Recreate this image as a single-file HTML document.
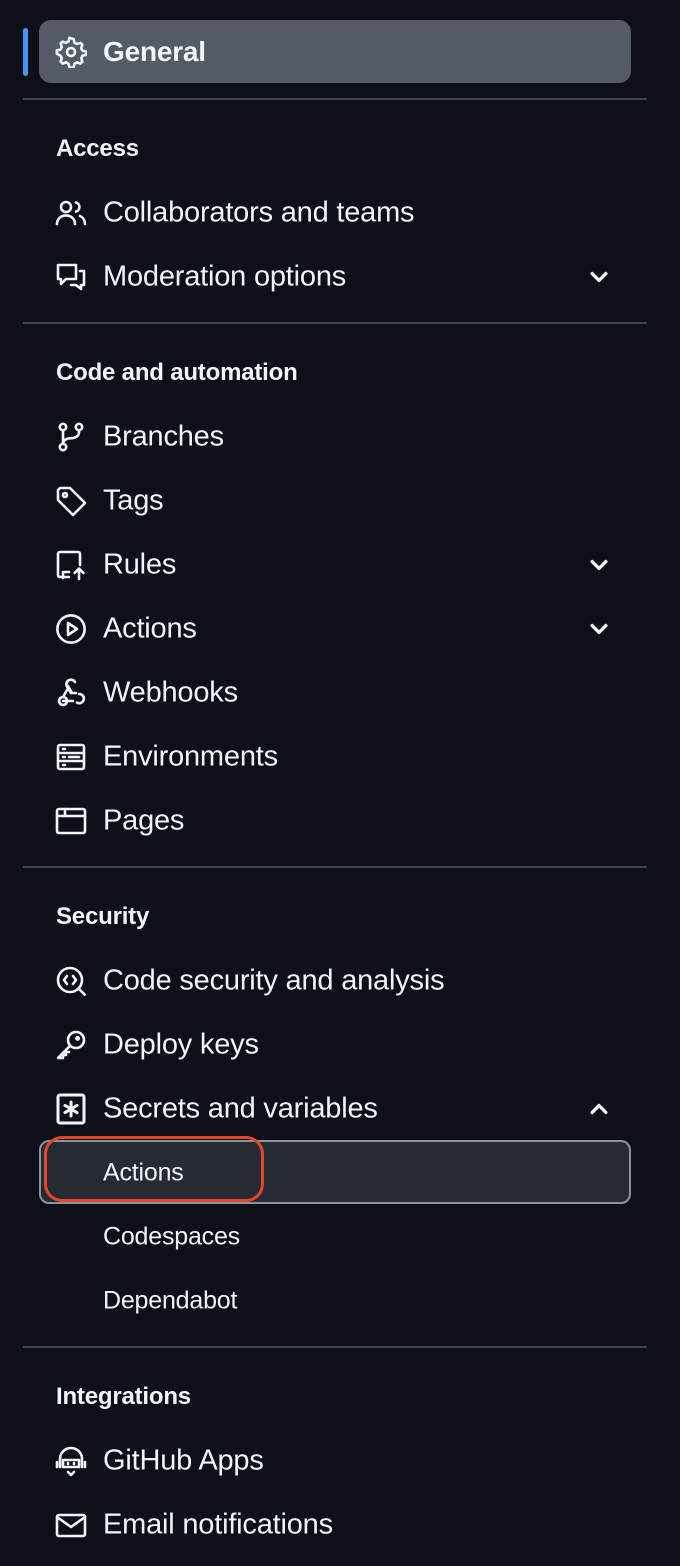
<!DOCTYPE html>
<html><head><meta charset="utf-8"><style>
body{margin:0;width:680px;height:1566px;background:#0d1117;font-family:"Liberation Sans",sans-serif;color:#f0f6fc;position:relative;overflow:hidden}
.r{position:absolute;left:0;height:64px;width:680px}
.t{position:absolute;left:103px;top:50%;transform:translateY(-50%);font-size:29px;white-space:nowrap;letter-spacing:-0.2px}
.h{position:absolute;left:56px;font-size:24px;font-weight:bold;transform:translateY(-50%);letter-spacing:-0.2px}
.s{position:absolute;left:23px;width:624px;height:2px;background:#3d444d}
svg.i{position:absolute;left:55px;top:16px;width:32px;height:32px;fill:none;stroke:#f0f6fc;stroke-width:1.3;stroke-linecap:round;stroke-linejoin:round}
svg.c{position:absolute;left:588px;top:21px;width:22px;height:22px;fill:none;stroke:#f0f6fc;stroke-width:2.4;stroke-linecap:round;stroke-linejoin:round}
.sub{font-size:25px}
</style></head><body>
<div style="position:absolute;left:23px;top:28px;width:5px;height:48px;border-radius:3px;background:#4493f8"></div>
<div style="position:absolute;left:39px;top:20px;width:592px;height:63px;border-radius:12px;background:#545b66"></div>
<div class="r" style="top:20px"><svg class="i" viewBox="0 0 16 16"><circle cx="8" cy="8" r="2"/><path d="M8 1.2l1.3.3.4 1.8 1.3.7 1.7-.6 1 1-.6 1.7.7 1.3 1.8.4v1.6l-1.8.4-.7 1.3.6 1.7-1 1-1.7-.6-1.3.7-.4 1.8H7.2l-.4-1.8-1.3-.7-1.7.6-1-1 .6-1.7-.7-1.3L.9 8.8V7.2l1.8-.4.7-1.3-.6-1.7 1-1 1.7.6 1.3-.7.4-1.8z"/></svg><span class="t" style="font-weight:bold;font-size:28px">General</span></div>
<div class="s" style="top:98px"></div>
<div class="h" style="top:149px">Access</div>
<div class="r" style="top:181px"><svg class="i" viewBox="0 0 16 16"><circle cx="5.5" cy="5" r="2.5"/><path d="M1 13.5c0-2.5 2-4.3 4.5-4.3s4.5 1.8 4.5 4.3M10.5 2.7a2.4 2.4 0 0 1 0 4.6M12.5 9.5c1.5.7 2.5 2.2 2.5 4"/></svg><span class="t">Collaborators and teams</span></div>
<div class="r" style="top:245px"><svg class="i" viewBox="0 0 16 16"><path d="M1.5 2h9v7h-5l-2.5 2.5V9h-1.5zM12.5 5h2v7H13v2l-2.5-2H8"/></svg><span class="t">Moderation options</span><svg class="c" viewBox="0 0 16 16"><path d="M3 5.5l5 5 5-5"/></svg></div>
<div class="s" style="top:322px"></div>
<div class="h" style="top:373px">Code and automation</div>
<div class="r" style="top:405px"><svg class="i" viewBox="0 0 16 16"><circle cx="4" cy="3" r="1.6"/><circle cx="4" cy="13" r="1.6"/><circle cx="12" cy="3" r="1.6"/><path d="M4 4.6v6.8M12 4.6v1c0 2-2 3-4 3s-4 1-4 2.8"/></svg><span class="t">Branches</span></div>
<div class="r" style="top:469px"><svg class="i" viewBox="0 0 16 16"><path d="M1.5 2.5v5l7.5 7.5 6-6-7.5-7.5h-5z"/><circle cx="5" cy="5" r="1"/></svg><span class="t">Tags</span></div>
<div class="r" style="top:533px"><svg class="i" viewBox="0 0 16 16"><path d="M7 14H2.5a1 1 0 0 1-1-1V2.5a1 1 0 0 1 1-1h9a1 1 0 0 1 1 1V8M4 14.5v-3h3M12 15v-5M9.8 12l2.2-2.2 2.2 2.2"/></svg><span class="t">Rules</span><svg class="c" viewBox="0 0 16 16"><path d="M3 5.5l5 5 5-5"/></svg></div>
<div class="r" style="top:597px"><svg class="i" viewBox="0 0 16 16"><circle cx="8" cy="8" r="6.8"/><path d="M6.5 5v6l4.5-3z"/></svg><span class="t">Actions</span><svg class="c" viewBox="0 0 16 16"><path d="M3 5.5l5 5 5-5"/></svg></div>
<div class="r" style="top:661px"><svg class="i" viewBox="0 0 16 16"><path d="M6 6.5 4 10M10 2.5a2.3 2.3 0 0 0-4 2.3L8 8M4 12h5M12 8.5a2.3 2.3 0 1 1-1 4.3M4 10a2 2 0 1 0 .1 0M6.5 4.5l2 3.5 2 0"/></svg><span class="t">Webhooks</span></div>
<div class="r" style="top:725px"><svg class="i" viewBox="0 0 16 16"><rect x="1.5" y="2" width="13" height="12" rx="1"/><path d="M1.5 6h13M1.5 10h13M4 4h1M4 8h1M4 12h1M7 8h5"/></svg><span class="t">Environments</span></div>
<div class="r" style="top:789px"><svg class="i" viewBox="0 0 16 16"><rect x="1" y="2" width="14" height="12" rx="1"/><path d="M1 5.5h14M5 2v3.5"/></svg><span class="t">Pages</span></div>
<div class="s" style="top:866px"></div>
<div class="h" style="top:917px">Security</div>
<div class="r" style="top:949px"><svg class="i" viewBox="0 0 16 16"><circle cx="7.5" cy="7.5" r="6"/><path d="M12 12l2.8 2.8M6 5.5 4.5 7.5 6 9.5M9 5.5l1.5 2L9 9.5"/></svg><span class="t">Code security and analysis</span></div>
<div class="r" style="top:1013px"><svg class="i" viewBox="0 0 16 16"><circle cx="10.5" cy="5.5" r="4"/><path d="M7.6 8.3 1.5 14.5h2.5v-1.5h1.5v-1.5H7"/><circle cx="11.3" cy="4.7" r=".6"/></svg><span class="t">Deploy keys</span></div>
<div class="r" style="top:1077px"><svg class="i" viewBox="0 0 16 16" style="stroke-width:1.5"><rect x="1.5" y="1" width="13" height="14" rx="1"/><path d="M8 4.5v7M5 6.2l6 3.6M11 6.2 5 9.8"/></svg><span class="t">Secrets and variables</span><svg class="c" viewBox="0 0 16 16"><path d="M3 10.5l5-5 5 5"/></svg></div>
<div style="position:absolute;left:39px;top:1140px;width:588px;height:60px;border:2px solid #8b949e;border-radius:10px;background:#262a33"></div>
<div style="position:absolute;left:44px;top:1136px;width:214px;height:60px;border:3px solid #e5452a;border-radius:18px"></div>
<div class="r" style="top:1141px"><span class="t sub">Actions</span></div>
<div class="r" style="top:1205px"><span class="t sub">Codespaces</span></div>
<div class="r" style="top:1269px"><span class="t sub">Dependabot</span></div>
<div class="s" style="top:1346px"></div>
<div class="h" style="top:1397px">Integrations</div>
<div class="r" style="top:1429px"><svg class="i" viewBox="0 0 16 16"><path d="M2.5 11V7a5.5 5.5 0 0 1 11 0v4M1 8.5v2.5M15 8.5v2.5M4 7.5h8v3.5H4zM6.5 13.5l1.5 1.5 1.5-1.5M6.5 9v.5M9.5 9v.5"/></svg><span class="t">GitHub Apps</span></div>
<div class="r" style="top:1493px"><svg class="i" viewBox="0 0 16 16"><rect x="1" y="3" width="14" height="10.5" rx="1"/><path d="M1 4l7 5 7-5"/></svg><span class="t">Email notifications</span></div>
</body></html>
